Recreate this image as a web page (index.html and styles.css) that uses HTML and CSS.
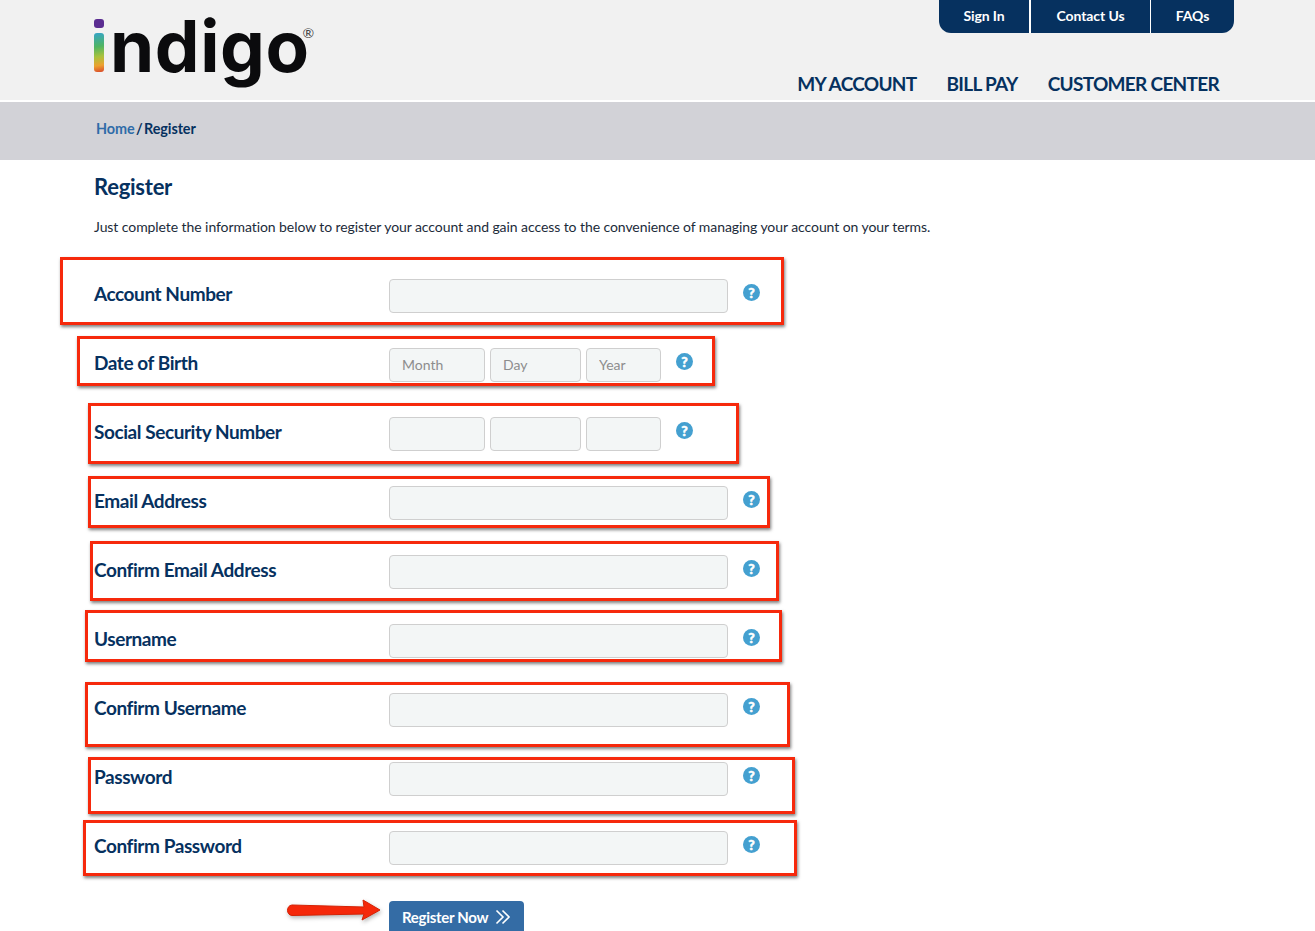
FILE: index.html
```html
<!DOCTYPE html>
<html lang="en">
<head>
  <meta charset="UTF-8">
  <meta name="viewport" content="width=device-width, initial-scale=1.0">
  <title>Register</title>
  <link rel="stylesheet" href="styles.css">
</head>
<body>
  <header class="site-header">
    <a class="logo" href="#">
      <span class="logo-i"><span class="logo-dot"></span><span class="logo-stem"></span></span><span class="logo-text">ndigo</span><span class="logo-reg">®</span>
    </a>
    <div class="header-right">
      <ul class="top-tabs">
        <li class="tab-signin"><a href="#">Sign In</a></li>
        <li class="tab-contact"><a href="#">Contact Us</a></li>
        <li class="tab-faq"><a href="#">FAQs</a></li>
      </ul>
      <nav class="main-nav">
        <a href="#">MY ACCOUNT</a>
        <a href="#">BILL PAY</a>
        <a href="#">CUSTOMER CENTER</a>
      </nav>
    </div>
  </header>

  <div class="breadcrumb"><a href="#">Home</a> / Register</div>

  <main class="content">
    <h1>Register</h1>
    <p class="intro">Just complete the information below to register your account and gain access to the convenience of managing your account on your terms.</p>

    <form class="register-form">
      <div class="form-row">
        <label>Account Number</label>
        <input type="text" class="field">
        <span class="help">?</span>
      </div>
      <div class="form-row">
        <label>Date of Birth</label>
        <input type="text" class="field part-month" placeholder="Month">
        <input type="text" class="field part-day" placeholder="Day">
        <input type="text" class="field part-year" placeholder="Year">
        <span class="help">?</span>
      </div>
      <div class="form-row">
        <label>Social Security Number</label>
        <input type="text" class="field part-month">
        <input type="text" class="field part-day">
        <input type="text" class="field part-year">
        <span class="help">?</span>
      </div>
      <div class="form-row">
        <label>Email Address</label>
        <input type="text" class="field">
        <span class="help">?</span>
      </div>
      <div class="form-row">
        <label>Confirm Email Address</label>
        <input type="text" class="field">
        <span class="help">?</span>
      </div>
      <div class="form-row">
        <label>Username</label>
        <input type="text" class="field">
        <span class="help">?</span>
      </div>
      <div class="form-row">
        <label>Confirm Username</label>
        <input type="text" class="field">
        <span class="help">?</span>
      </div>
      <div class="form-row">
        <label>Password</label>
        <input type="password" class="field">
        <span class="help">?</span>
      </div>
      <div class="form-row">
        <label>Confirm Password</label>
        <input type="password" class="field">
        <span class="help">?</span>
      </div>
      <div class="form-actions">
        <button type="button" class="btn-register">Register Now
          <svg class="chevrons" width="16" height="16" viewBox="0 0 16 16" fill="none" stroke="#fff" stroke-width="1.6"><path d="M1.500 1.500 8 8l-6.500 6.500"/><path d="M7.500 1.500 14 8l-6.500 6.500"/></svg>
        </button>
      </div>
    </form>
  </main>

  <!-- red annotation boxes drawn over the form -->
  <div class="mark mark-1"></div>
  <div class="mark mark-2"></div>
  <div class="mark mark-3"></div>
  <div class="mark mark-4"></div>
  <div class="mark mark-5"></div>
  <div class="mark mark-6"></div>
  <div class="mark mark-7"></div>
  <div class="mark mark-8"></div>
  <div class="mark mark-9"></div>
  <svg class="mark-arrow" width="96" height="28" viewBox="0 0 96 28">
    <path d="M6 8 78 10 77 3 94 13 76 23 78 17 6 18.500C0 18 0 8.500 6 8Z" fill="#f5280a" stroke="#d42205" stroke-width="1" stroke-linejoin="round"/>
  </svg>
</body>
</html>
```

FILE: styles.css
```css
html, body {
  margin: 0;
  padding: 0;
  height: 931px;
  overflow: hidden;
}
body {
  position: relative;
  background: #fff;
  font-family: Lato, "Liberation Sans", sans-serif;
  color: #06315f;
}
a {
  color: inherit;
  text-decoration: none;
}

/* header */
.site-header {
  display: flex;
  justify-content: space-between;
  height: 100px;
  padding: 0 81px 0 94px;
  background: #f1f1f1;
  border-bottom: 2px solid #fff;
}
.logo {
  display: flex;
  align-items: flex-start;
  color: #0b0b0d;
}
.logo-i {
  display: flex;
  flex-direction: column;
  gap: 5px;
  width: 10px;
  margin: 19px 6px 0 0;
}
.logo-dot {
  height: 9px;
  border-radius: 3px;
  background: #5b2d91;
}
.logo-stem {
  height: 39px;
  border-radius: 3px;
  background: linear-gradient(170deg, #35a4c8 0%, #4fb562 35%, #a9c23c 60%, #eda12f 82%, #d9482b 100%);
}
.logo-text {
  font-family: Inter, sans-serif;
  font-weight: 700;
  font-size: 71px;
  line-height: 80px;
  margin-top: 6px;
  letter-spacing: 0.6px;
}
.logo-reg {
  font-size: 14px;
  line-height: 14px;
  margin: 26px 0 0 -7px;
  color: #444;
}
.header-right {
  display: flex;
  flex-direction: column;
  align-items: flex-end;
}
.top-tabs {
  display: flex;
  list-style: none;
  margin: 0;
  padding: 0;
  height: 33px;
  border-radius: 0 0 12px 12px;
  overflow: hidden;
  background: #06315f;
  font-size: 14px;
  font-weight: 700;
  letter-spacing: -0.1px;
}
.top-tabs li {
  display: flex;
  align-items: center;
  justify-content: center;
  padding-bottom: 2px;
  color: #fff;
  border-left: 1px solid #fff;
}
.top-tabs .tab-signin {
  width: 90px;
  border-left: 0;
}
.top-tabs .tab-contact {
  width: 119px;
  border-left-width: 2px;
}
.top-tabs .tab-faq {
  width: 83px;
}
.main-nav {
  display: flex;
  gap: 30px;
  margin-top: 38px;
  padding-right: 15px;
  font-size: 19px;
  font-weight: 700;
  line-height: 26px;
  letter-spacing: -0.7px;
}

.breadcrumb {
  height: 58px;
  padding-left: 96px;
  background: #d2d2d7;
  font-size: 14.400px;
  font-weight: 700;
  line-height: 54px;
  letter-spacing: -0.08px;
  word-spacing: -2px;
}
.breadcrumb a {
  color: #2f6ca8;
}

/* form */
.content {
  padding-left: 94px;
}
h1 {
  margin: 0;
  padding-top: 14px;
  font-size: 22px;
  font-weight: 700;
  line-height: 26px;
  letter-spacing: -0.25px;
}
.intro {
  margin: 16px 0 0;
  font-size: 14px;
  line-height: 22px;
  letter-spacing: -0.075px;
  color: #1c2b3a;
}
.register-form {
  margin-top: 41px;
}
.form-row {
  display: flex;
  align-items: flex-start;
  gap: 5px;
  height: 69px;
}
.form-row label {
  width: 290px;
  font-size: 19px;
  font-weight: 700;
  line-height: 30px;
  letter-spacing: -0.43px;
}
.field {
  box-sizing: border-box;
  width: 339px;
  height: 34px;
  padding: 0 12px 2px;
  background: #f3f6f6;
  border: 1px solid #cfcfcf;
  border-radius: 4px;
  font-family: inherit;
  font-size: 14px;
}
.field::placeholder {
  color: #8d8d8d;
  opacity: 1;
}
.part-month {
  width: 96px;
}
.part-day {
  width: 91px;
}
.part-year {
  width: 75px;
}
.help {
  width: 17px;
  height: 17px;
  margin: 5px 0 0 10px;
  border-radius: 50%;
  background: #44a0d0;
  color: #fff;
  font-size: 14px;
  font-weight: 900;
  line-height: 17px;
  text-align: center;
  -webkit-text-stroke: 0.5px #fff;
}
.form-actions {
  padding: 1px 0 0 295px;
}
.btn-register {
  display: flex;
  align-items: center;
  gap: 7px;
  height: 34px;
  padding: 0 13px 2px;
  background: #346ca5;
  border: 0;
  border-radius: 4px 4px 0 0;
  color: #fff;
  font-family: inherit;
  font-size: 15px;
  font-weight: 700;
  letter-spacing: -0.3px;
}

/* annotation layer */
.mark {
  position: absolute;
  box-sizing: border-box;
  border: 3px solid #f6290c;
  box-shadow: 1px 2px 3px rgba(0, 0, 0, 0.5);
}
.mark-1 { left: 60px; top: 257px; width: 724px; height: 68px; }
.mark-2 { left: 77px; top: 336px; width: 638px; height: 50px; }
.mark-3 { left: 88px; top: 403px; width: 651px; height: 61px; }
.mark-4 { left: 88px; top: 476px; width: 682px; height: 52px; }
.mark-5 { left: 90px; top: 541px; width: 689px; height: 60px; }
.mark-6 { left: 85px; top: 610px; width: 697px; height: 52px; }
.mark-7 { left: 85px; top: 682px; width: 705px; height: 65px; }
.mark-8 { left: 88px; top: 757px; width: 707px; height: 57px; }
.mark-9 { left: 83px; top: 820px; width: 714px; height: 56px; }
.mark-arrow {
  position: absolute;
  left: 286px;
  top: 897px;
  filter: drop-shadow(1px 2px 2px rgba(0, 0, 0, 0.3));
}
```
